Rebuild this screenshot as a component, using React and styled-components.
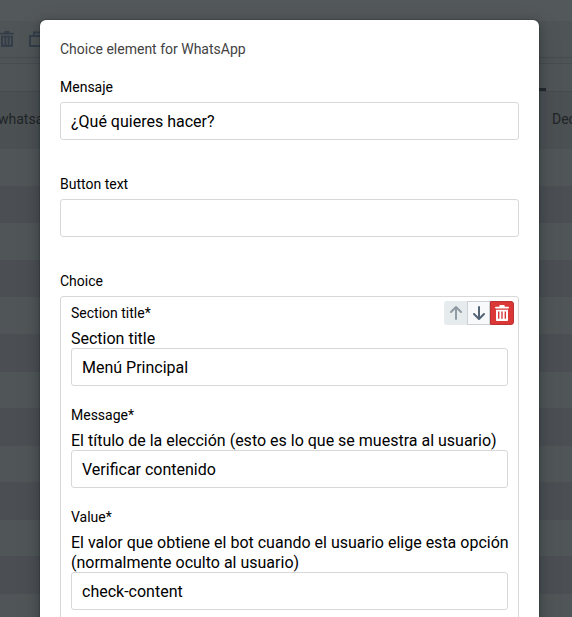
import React from "react";
import styled, { createGlobalStyle } from "styled-components";

const GlobalStyle = createGlobalStyle`
  * { box-sizing: border-box; }
  body { margin: 0; overflow: hidden; font-family: Roboto, sans-serif; }
`;

const Screen = styled.div`
  position: relative;
  width: 572px;
  height: 617px;
  overflow: hidden;
  background: #505557;
`;

const Backdrop = styled.div`
  display: flex;
  flex-direction: column;
  height: 100%;
`;

const TopBar = styled.div`
  height: 21px;
  flex: none;
  background: #53585a;
`;

const Toolbar = styled.div`
  height: 37px;
  flex: none;
  display: flex;
  align-items: center;
  gap: 14px;
  background: #4f5456;
  border-bottom: 1px solid #464b4e;
  color: #343e49;
`;

const Gap = styled.div`
  height: 6px;
  flex: none;
  background: #4e5355;
  border-bottom: 1px solid #474c4f;
`;

const TabStrip = styled.div`
  height: 28px;
  flex: none;
  display: flex;
  align-items: flex-end;
  justify-content: flex-end;
  padding-right: 26px;
  background: #4f5456;
  border-bottom: 1px solid #454a4d;
`;

const ActiveTab = styled.div`
  width: 40px;
  height: 3px;
  background: #25292d;
`;

const TableHead = styled.div`
  height: 57px;
  flex: none;
  display: flex;
  align-items: center;
  justify-content: space-between;
  background: #4b5053;
  color: #202426;
  font-size: 14px;
  padding-bottom: 3px;
`;

const HeadCell = styled.span`
  margin-left: ${(p) => p.$shift || 0}px;
  width: ${(p) => p.$width}px;
  white-space: nowrap;
`;

const TableRow = styled.div`
  height: ${(p) => (p.$dark ? 37.7 : 36.5)}px;
  flex: none;
  background: ${(p) => (p.$dark ? "#4b4f53" : "#505557")};
`;

const Modal = styled.section`
  position: absolute;
  top: 20px;
  left: 40px;
  width: 499px;
  height: 640px;
  padding: 20px;
  border-radius: 6px;
  background: #fff;
  box-shadow: 0 0 0 1px rgba(16, 22, 26, 0.15), 0 2px 8px rgba(16, 22, 26, 0.3),
    0 6px 24px rgba(16, 22, 26, 0.15);
`;

const Title = styled.p`
  margin: 0;
  height: 18px;
  line-height: 18px;
  font-size: 14px;
  color: #424242;
`;

const Field = styled.div`
  display: flex;
  flex-direction: column;
  margin-top: ${(p) => p.$top}px;
`;

const Label = styled.label`
  font-size: 14px;
  line-height: 18px;
  height: 24px;
  color: #000;
`;

const Hint = styled.span`
  padding-top: 1px;
  margin-bottom: -1px;
  font-size: 16px;
  line-height: 20px;
  color: #000;
  white-space: nowrap;
`;

const Input = styled.input`
  width: 100%;
  height: 38px;
  padding: 0 10px;
  border: 1px solid #d8d8d8;
  border-radius: 3px;
  background: #fff;
  color: #000;
  font: 16px Roboto, sans-serif;
  outline: none;
`;

const ChoiceBox = styled.div`
  height: 360px;
  padding: 4px 10px;
  border: 1px solid #d8d8d8;
  border-radius: 3px;
`;

const SectionHead = styled.div`
  display: flex;
  justify-content: space-between;
  height: 27px;
`;

const SectionLabel = styled(Label)`
  padding-top: 3px;
`;

const ButtonGroup = styled.div`
  display: flex;
  width: 70px;
  height: 24px;
  margin-right: -6px;
`;

const VARIANTS = {
  disabled: "background:#e6ebee;color:#8f9ba4;border:0;border-radius:3px 0 0 3px;width:23px;",
  plain: "background:#f7f9fa;color:#526476;border:1px solid #cbd1d4;width:23px;",
  danger: "background:#db3737;color:#fff;border:1px solid #b93334;border-radius:0 3px 3px 0;width:24px;",
};

const IconButton = styled.button`
  display: flex;
  align-items: center;
  justify-content: center;
  flex: none;
  height: 24px;
  padding: 0;
  ${(p) => VARIANTS[p.$variant]}
`;

const IconSlot = styled.span`
  display: flex;
  margin-left: ${(p) => p.$shift || 0}px;
`;

function TrashIcon() {
  return (
    <svg width="16" height="16" viewBox="0 0 16 16" fill="currentColor">
      <path d="M14.2 1.8H10.7V1c0-.5-.4-.9-1-.9H6.3c-.6 0-1 .4-1 .9v.8H1.8c-.5 0-.8.3-.8.8s.3.9.8.9h12.4c.5 0 .8-.4.8-.9s-.3-.8-.8-.8z" />
      <path
        fillRule="evenodd"
        d="M2 4.7V15c0 .6.4 1 1 1h10c.6 0 1-.4 1-1V4.7zM5.4 13.8H4V6.5h1.4zm3.3 0H7.3V6.5h1.4zm3.3 0h-1.4V6.5H12z"
      />
    </svg>
  );
}

function ArrowIcon({ down }) {
  return (
    <svg width="16" height="16" viewBox="0 0 16 16" fill="none" stroke="currentColor" strokeWidth="2" strokeLinecap="round" strokeLinejoin="round">
      <path d={down ? "M8 2v11.5M3 9l5 5 5-5" : "M8 14V2.5M3 7l5-5 5 5"} />
    </svg>
  );
}

function DuplicateIcon() {
  return (
    <svg width="17" height="17" viewBox="0 0 17 17" fill="none" stroke="currentColor" strokeWidth="2">
      <path d="M5 4V1.5h11v10h-2M1 5h11v10H1z" />
    </svg>
  );
}

const ROWS = Array.from({ length: 13 }, (_, i) => i % 2 === 1);

export default function App() {
  return (
    <Screen>
      <GlobalStyle />
      <Backdrop>
        <TopBar />
        <Toolbar>
          <IconSlot $shift={-1}><TrashIcon /></IconSlot>
          <IconSlot><DuplicateIcon /></IconSlot>
        </Toolbar>
        <Gap />
        <TabStrip><ActiveTab /></TabStrip>
        <TableHead>
          <HeadCell $shift={-2} $width={60}>whatsapp</HeadCell>
          <HeadCell $width={20}>Dec</HeadCell>
        </TableHead>
        {ROWS.map((dark, i) => <TableRow key={i} $dark={dark} />)}
      </Backdrop>
      <Modal>
        <Title>Choice element for WhatsApp</Title>
        <Field $top={20}>
          <Label>Mensaje</Label>
          <Input defaultValue="¿Qué quieres hacer?" />
        </Field>
        <Field $top={35}>
          <Label>Button text</Label>
          <Input defaultValue="" />
        </Field>
        <Field $top={35}>
          <Label>Choice</Label>
          <ChoiceBox>
            <SectionHead>
              <SectionLabel>Section title*</SectionLabel>
              <ButtonGroup>
                <IconButton $variant="disabled" disabled><ArrowIcon /></IconButton>
                <IconButton $variant="plain"><ArrowIcon down /></IconButton>
                <IconButton $variant="danger"><TrashIcon /></IconButton>
              </ButtonGroup>
            </SectionHead>
            <Field $top={0}>
              <Hint>Section title</Hint>
              <Input defaultValue="Menú Principal" />
            </Field>
            <Field $top={20}>
              <Label>Message*</Label>
              <Hint>El título de la elección (esto es lo que se muestra al usuario)</Hint>
              <Input defaultValue="Verificar contenido" />
            </Field>
            <Field $top={20}>
              <Label>Value*</Label>
              <Hint>El valor que obtiene el bot cuando el usuario elige esta opción<br />(normalmente oculto al usuario)</Hint>
              <Input defaultValue="check-content" />
            </Field>
          </ChoiceBox>
        </Field>
      </Modal>
    </Screen>
  );
}
